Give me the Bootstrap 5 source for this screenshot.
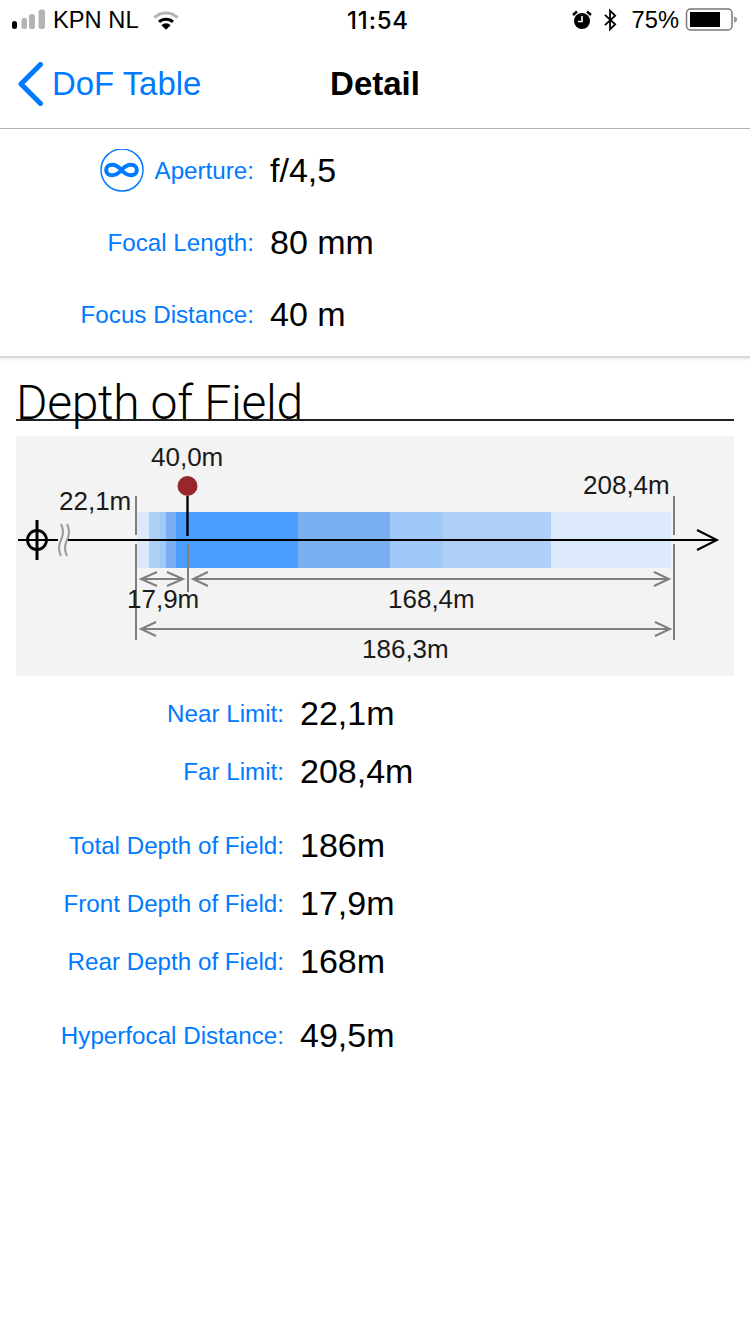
<!DOCTYPE html>
<html lang="en">
<head>
  <meta charset="UTF-8" />
  <meta name="viewport" content="width=device-width, initial-scale=1" />
  <title>Detail</title>
  <link href="https://cdn.jsdelivr.net/npm/bootstrap@5.3.3/dist/css/bootstrap.min.css" rel="stylesheet" />
  <style>
    body { width: 750px; min-height: 1334px; background: #fff; color: #000; font-family: "Liberation Sans", Arial, sans-serif; }
    .status-bar { height: 40px; font-size: 23.7px; padding: 1px 12px 0; }
    .status-side { flex: 1 1 0; }
    .status-time { font-family: Inter, "Liberation Sans", sans-serif; font-weight: 500; font-size: 24px; letter-spacing: 0.8px; margin-left: 6px; }
    .carrier-name { margin: 0 14px 0 7px; }
    .bt-icon { margin: 0 14px 0 11px; }
    .battery-icon { margin-left: 6px; }
    .nav-bar { height: 89px; border-bottom: 1px solid #b2b2b2; padding: 0 18px 0; }
    .nav-side { flex: 1 1 0; color: #007aff; font-size: 32.9px; gap: 9px; }
    .nav-title { font-size: 33px; font-weight: 700; }
    .top-rows { padding-top: 6px; height: 229px; border-bottom: 2px solid #d9d9d9; box-shadow: 0 2px 2px #f0f0f0; }
    .info-row { height: 72px; }
    .info-label { width: 254px; color: #007aff; font-size: 24.2px; gap: 11px; }
    .info-value { font-size: 34px; margin: -2px 0 0 16px; line-height: 1; }
    .section-title { font-family: Roboto, "Liberation Sans", sans-serif; font-weight: 300; font-size: 48px; line-height: 52px; margin: 0 16px 15px; border-bottom: 2px solid #222; padding-top: 19px; letter-spacing: -0.3px; box-sizing: content-box; height: 42px; }
    .dof-chart { display: block; margin: 0 16px; }
    .dof-chart text { font-family: "Liberation Sans", Arial, sans-serif; font-size: 26px; fill: #1a1a1a; }
    .result-rows { padding-top: 9px; }
    .result-group { margin-bottom: 16px; }
    .result-row { height: 58px; }
    .result-row .info-label { width: 284px; }
  </style>
</head>
<body>

  <div class="status-bar d-flex align-items-center">
    <div class="status-side d-flex align-items-center">
      <svg width="34" height="22" viewBox="0 0 34 22" class="flex-shrink-0">
        <rect x="0" y="12" width="5" height="8" rx="2.5" fill="#000"/>
        <rect x="9.5" y="9" width="5.5" height="11" rx="2.5" fill="#b4b4b4"/>
        <rect x="17" y="5" width="6" height="15" rx="2.5" fill="#b4b4b4"/>
        <rect x="26.5" y="0.5" width="6.5" height="19.5" rx="2.5" fill="#b4b4b4"/>
      </svg>
      <span class="carrier-name">KPN NL</span>
      <svg width="26" height="21" viewBox="0 0 28 22" class="flex-shrink-0">
        <path d="M1.5 8 A18 18 0 0 1 26.5 8" fill="none" stroke="#b4b4b4" stroke-width="3.4"/>
        <path d="M6.5 12.5 A11 11 0 0 1 21.5 12.5" fill="none" stroke="#000" stroke-width="3.2"/>
        <path d="M9 16 L14 21 L19 16 A7 7 0 0 0 9 16 Z" fill="#000"/>
      </svg>
    </div>
    <div class="status-time">11:54</div>
    <div class="status-side d-flex align-items-center justify-content-end">
      <svg width="20" height="20" viewBox="0 0 20 20" class="flex-shrink-0">
        <circle cx="10" cy="11" r="8" fill="#000"/>
        <path d="M10 6 V11.5 H6" fill="none" stroke="#fff" stroke-width="1.6"/>
        <path d="M1 5 L5 1.5 M19 5 L15 1.5" stroke="#000" stroke-width="2.4"/>
      </svg>
      <svg width="15" height="24" viewBox="0 0 16 24" class="bt-icon flex-shrink-0">
        <path d="M2 6.5 L13 16.5 L7.5 22 V2 L13 7.5 L2 17.5" fill="none" stroke="#000" stroke-width="1.9"/>
      </svg>
      <span>75%</span>
      <svg width="53" height="24" viewBox="0 0 53 24" class="battery-icon flex-shrink-0">
        <rect x="1.5" y="1" width="45.5" height="21" rx="4" fill="none" stroke="#777" stroke-width="1.5"/>
        <rect x="5" y="4" width="30" height="15" fill="#000"/>
        <path d="M49 8.5 Q52 9 52 11.5 Q52 14 49 14.5 Z" fill="#999"/>
      </svg>
    </div>
  </div>

  <div class="nav-bar d-flex align-items-center">
    <div class="nav-side d-flex align-items-center">
      <svg width="25" height="44" viewBox="0 0 25 44" class="flex-shrink-0">
        <path d="M22.5 2.5 L3 22 L22.5 41.5" fill="none" stroke="#007aff" stroke-width="5" stroke-linecap="round" stroke-linejoin="round"/>
      </svg>
      <span>DoF Table</span>
    </div>
    <div class="nav-title">Detail</div>
    <div class="nav-side"></div>
  </div>

  <div class="top-rows">
    <div class="info-row d-flex align-items-center">
      <div class="info-label d-flex align-items-center justify-content-end">
        <svg width="44" height="44" viewBox="0 1 44 44" class="flex-shrink-0">
          <circle cx="22" cy="22" r="21" fill="#fff" stroke="#007aff" stroke-width="1.5"/>
          <path d="M21.5 22 C17.5 17.5 15 16.8 12 16.8 C8.5 16.8 6.2 19 6.2 22 C6.2 25 8.5 27.2 12 27.2 C15 27.2 17.5 26.5 21.5 22 C25.5 17.5 28 16.8 31 16.8 C34.5 16.8 36.8 19 36.8 22 C36.8 25 34.5 27.2 31 27.2 C28 27.2 25.5 26.5 21.5 22 Z" fill="none" stroke="#007aff" stroke-width="4"/>
        </svg>
        <span>Aperture:</span>
      </div>
      <div class="info-value">f/4,5</div>
    </div>
    <div class="info-row d-flex align-items-center">
      <div class="info-label text-end">Focal Length:</div>
      <div class="info-value">80 mm</div>
    </div>
    <div class="info-row d-flex align-items-center">
      <div class="info-label text-end">Focus Distance:</div>
      <div class="info-value">40 m</div>
    </div>
  </div>

  <div class="section-title">Depth of Field</div>

  <svg class="dof-chart" width="718" height="240" viewBox="16 436 718 240">
    <rect x="16" y="436" width="718" height="240" fill="#f3f3f3"/>
    <!-- depth bands -->
    <rect x="137" y="512" width="12" height="56" fill="#dbe9fa"/>
    <rect x="149" y="512" width="11" height="56" fill="#aed0f7"/>
    <rect x="160" y="512" width="6" height="56" fill="#a0c8f8"/>
    <rect x="166" y="512" width="10" height="56" fill="#7ab0f2"/>
    <rect x="176" y="512" width="122" height="56" fill="#4b9eff"/>
    <rect x="298" y="512" width="92" height="56" fill="#7ab0f2"/>
    <rect x="390" y="512" width="53" height="56" fill="#a0c8f8"/>
    <rect x="443" y="512" width="108" height="56" fill="#aed0f7"/>
    <rect x="551" y="512" width="120" height="56" fill="#dbe9fa"/>
    <!-- limits -->
    <g stroke="#7f7f7f" stroke-width="2" fill="none">
      <path d="M136 496 V535 M136 544 V640 M674 496 V535 M674 544 V640 M188 544 V592"/>
      <path d="M141 579 H183 M157 572 L141 579 L157 586 M167 572 L183 579 L167 586"/>
      <path d="M193 579 H669 M208 572 L193 579 L208 586 M654 572 L669 579 L654 586"/>
      <path d="M141 629 H670 M156 622 L141 629 L156 636 M655 622 L670 629 L655 636"/>
      <path d="M61 524 Q65 532 61 540 Q57 548 61 556 M67 524 Q71 532 67 540 Q63 548 67 556" stroke="#999" stroke-width="2"/>
    </g>
    <!-- axis -->
    <path d="M18 540 H58 M68 540 H716 M697 530 L717 540 L697 550" fill="none" stroke="#000" stroke-width="2"/>
    <circle cx="37" cy="540" r="9.5" fill="none" stroke="#000" stroke-width="2.8"/>
    <path d="M37 520 V560" stroke="#000" stroke-width="3"/>
    <!-- focus pin -->
    <path d="M187.5 496 V536" stroke="#000" stroke-width="2.4"/>
    <circle cx="187.5" cy="486" r="10" fill="#96282d"/>
    <text x="151" y="466">40,0m</text>
    <text x="59" y="510">22,1m</text>
    <text x="583" y="494">208,4m</text>
    <text x="127" y="608">17,9m</text>
    <text x="388" y="608">168,4m</text>
    <text x="362" y="658">186,3m</text>
  </svg>

  <div class="result-rows">
    <div class="result-group">
      <div class="result-row d-flex align-items-center"><div class="info-label text-end">Near Limit:</div><div class="info-value">22,1m</div></div>
      <div class="result-row d-flex align-items-center"><div class="info-label text-end">Far Limit:</div><div class="info-value">208,4m</div></div>
    </div>
    <div class="result-group">
      <div class="result-row d-flex align-items-center"><div class="info-label text-end">Total Depth of Field:</div><div class="info-value">186m</div></div>
      <div class="result-row d-flex align-items-center"><div class="info-label text-end">Front Depth of Field:</div><div class="info-value">17,9m</div></div>
      <div class="result-row d-flex align-items-center"><div class="info-label text-end">Rear Depth of Field:</div><div class="info-value">168m</div></div>
    </div>
    <div class="result-group">
      <div class="result-row d-flex align-items-center"><div class="info-label text-end">Hyperfocal Distance:</div><div class="info-value">49,5m</div></div>
    </div>
  </div>

</body>
</html>
